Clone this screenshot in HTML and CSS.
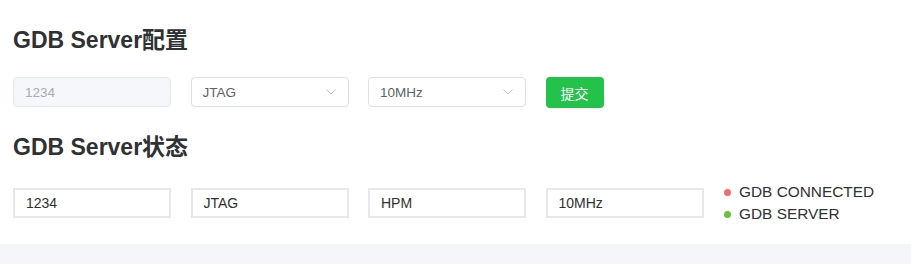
FILE: index.html
```html
<!DOCTYPE html>
<html lang="zh-CN">
<head>
<meta charset="utf-8">
<title>GDB Server</title>
<link rel="stylesheet" href="styles.css">
</head>
<body>
<div class="card">
  <h2 class="title first">GDB Server配置</h2>
  <div class="row form-row">
    <div class="field disabled">1234</div>
    <div class="field select"><span>JTAG</span><svg class="chev" width="10" height="6" viewBox="0 0 10 6"><path d="M0.5 0.5 L5 5 L9.5 0.5" fill="none" stroke="#c0c4cc" stroke-width="1"/></svg></div>
    <div class="field select"><span>10MHz</span><svg class="chev" width="10" height="6" viewBox="0 0 10 6"><path d="M0.5 0.5 L5 5 L9.5 0.5" fill="none" stroke="#c0c4cc" stroke-width="1"/></svg></div>
    <button class="btn">提交</button>
  </div>
  <h2 class="title second">GDB Server状态</h2>
  <div class="row status-row">
    <div class="box">1234</div>
    <div class="box">JTAG</div>
    <div class="box">HPM</div>
    <div class="box">10MHz</div>
    <ul class="status">
      <li><span class="dot red"></span>GDB CONNECTED</li>
      <li><span class="dot green"></span>GDB SERVER</li>
    </ul>
  </div>
</div>
</body>
</html>
```
FILE: styles.css
```css
html, body {
  margin: 0;
  padding: 0;
}
body {
  background: #f4f6fa;
  font-family: "Liberation Sans", Arial, "Noto Sans CJK SC", sans-serif;
  color: #303133;
}
.card {
  background: #fff;
  height: 244px;
  box-sizing: border-box;
  padding: 25px 13px 0;
  box-shadow: 0 3px 8px rgba(0, 0, 0, 0.1);
}
.title {
  margin: 0;
  font-size: 23px;
  line-height: 30px;
  font-weight: bold;
  color: #303133;
  font-family: "Liberation Sans", Arial, "Noto Sans CJK SC", sans-serif;
}
.title.second {
  margin-top: 24px;
}
.row {
  display: flex;
  align-items: center;
  gap: 19.5px;
}
.form-row {
  margin-top: 21px;
}
.field {
  box-sizing: border-box;
  width: 158px;
  height: 30px;
  border: 1px solid #dcdfe6;
  border-radius: 4px;
  padding: 0 11px;
  font-size: 13.5px;
  color: #606266;
  display: flex;
  align-items: center;
  justify-content: space-between;
}
.field.disabled {
  background: #f5f7fa;
  border-color: #e4e7ed;
  color: #a8abb2;
}
.chev {
  display: block;
  margin-right: 1px;
}
.btn {
  height: 31px;
  width: 58px;
  border: none;
  border-radius: 4px;
  background: #23c24a;
  color: #fff;
  font-size: 14px;
  font-family: "Noto Sans CJK SC", sans-serif;
  padding: 0;
  margin-top: 1px;
}
.status-row {
  margin-top: 19px;
}
.box {
  box-sizing: border-box;
  width: 158px;
  height: 30px;
  border: 2px solid #e6e8ed;
  padding: 0 11px;
  font-size: 14px;
  color: #303133;
  display: flex;
  align-items: center;
}
.status {
  list-style: none;
  margin: 0 0 0 1px;
  padding: 0;
  font-size: 15.4px;
  line-height: 22px;
  color: #303133;
}
.status li {
  display: flex;
  align-items: center;
}
.dot {
  width: 7px;
  height: 7px;
  border-radius: 50%;
  margin-right: 8px;
}
.dot.red { background: #f56c6c; }
.dot.green { background: #67c23a; }
```
